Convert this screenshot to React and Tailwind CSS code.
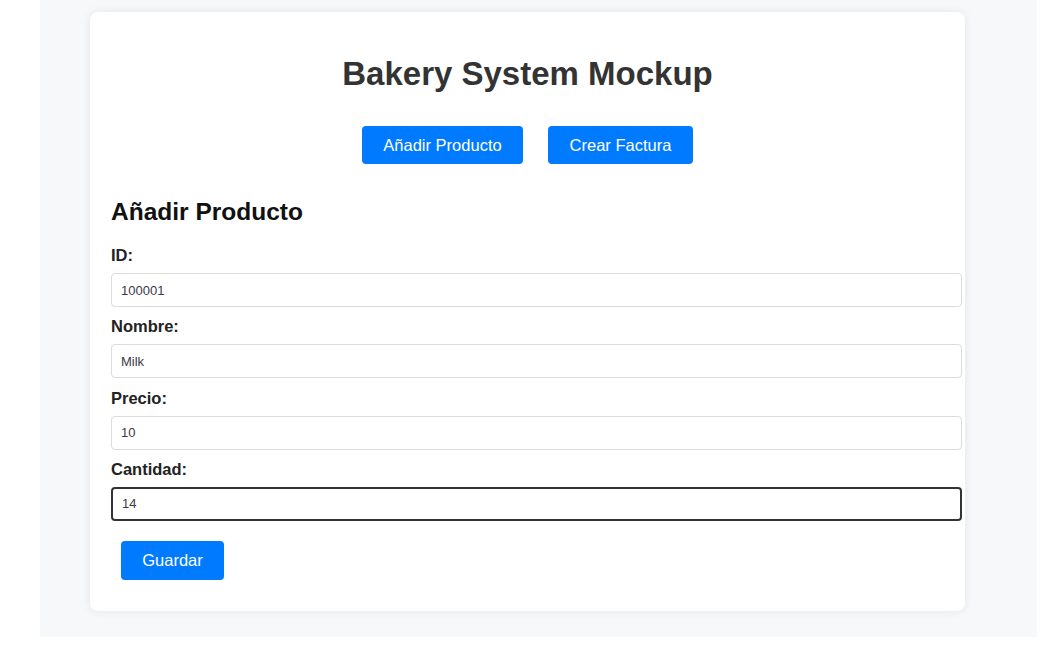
import React, { useState } from 'react';

const fields = [
  { key: 'id', label: 'ID:', value: '100001' },
  { key: 'nombre', label: 'Nombre:', value: 'Milk' },
  { key: 'precio', label: 'Precio:', value: '10' },
  { key: 'cantidad', label: 'Cantidad:', value: '14' },
];

export default function App() {
  const [form, setForm] = useState(Object.fromEntries(fields.map(f => [f.key, f.value])));
  const focused = 'cantidad';

  return (
    <div className="h-[668px] w-[1050px] bg-white font-['Liberation_Sans',Arial,sans-serif]">
      <div className="ml-[40px] h-[637px] w-[997px] bg-[#f7f8fa] pl-[50px] pt-[12px]">
        <div className="h-[599px] w-[875px] rounded-lg bg-white px-[21px] pt-[43px] shadow-[0_0_10px_rgba(0,0,0,0.08)]">
          <h1 className="text-center text-[33px] font-bold leading-[37px] text-[#333]">Bakery System Mockup</h1>

          <div className="mt-[34px] flex justify-center gap-[25px]">
            <button className="h-[38px] w-[161px] rounded bg-[#007bff] text-[16.5px] text-white">Añadir Producto</button>
            <button className="h-[38px] w-[145px] rounded bg-[#007bff] text-[16.5px] text-white">Crear Factura</button>
          </div>

          <h2 className="mt-[34px] text-[24.5px] font-bold leading-[28px] text-[#111]">Añadir Producto</h2>

          <div className="mt-[20px]">
            {fields.map(f => (
              <div key={f.key}>
                <label className="mb-[9px] block text-[16.5px] font-bold leading-[18px] text-[#222]">{f.label}</label>
                <input
                  value={form[f.key]}
                  onChange={e => setForm({ ...form, [f.key]: e.target.value })}
                  className={
                    'mb-[10.3px] block h-[34px] w-[851px] rounded bg-white px-[9px] text-[13px] text-[#3a3a48] outline-none ' +
                    (f.key === focused ? 'border-2 border-[#333]' : 'border border-[#dcdcdc]')
                  }
                />
              </div>
            ))}
          </div>

          <button className="ml-[10px] mt-[10px] h-[39px] w-[103px] rounded bg-[#007bff] text-[16.5px] text-white">Guardar</button>
        </div>
      </div>
    </div>
  );
}
